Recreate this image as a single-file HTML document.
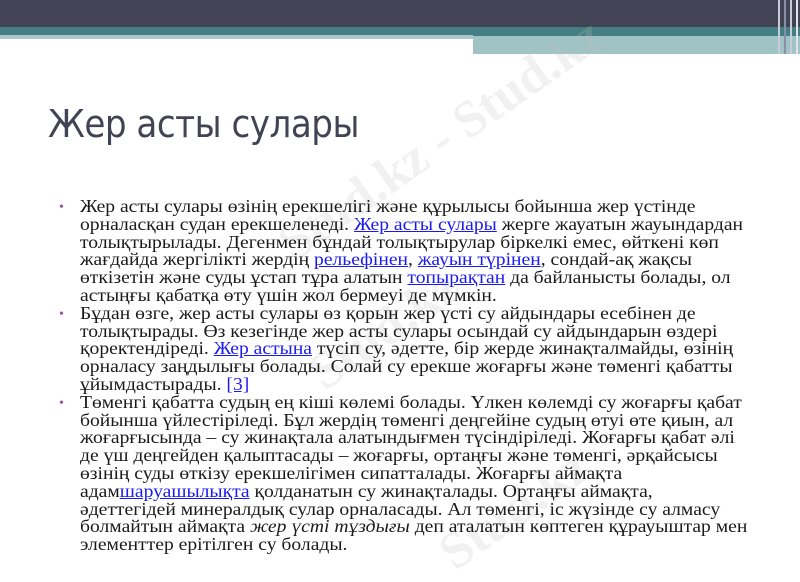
<!DOCTYPE html>
<html><head><meta charset="utf-8"><style>
body{margin:0;width:800px;height:556px;overflow:hidden;background:#fff;position:relative;font-family:"Liberation Serif",serif}
.d{position:absolute;left:0;top:0;width:800px;height:27px;background:#434356}
.t{position:absolute;left:0;top:27px;width:800px;height:9px;background:#447f83}
.l1{position:absolute;left:0;top:35px;width:473px;height:4px;background:#a9c9cb}
.l2{position:absolute;left:473px;top:36px;width:327px;height:18px;background:#a0c3c5}
.st{position:absolute;top:0;height:54px;width:2px;background:#c8ccd6}
h1{position:absolute;left:48px;top:102px;margin:0;font:38px "DejaVu Sans Condensed","DejaVu Sans",sans-serif;color:#434356;letter-spacing:-0.5px}
.b{position:absolute;left:80px;top:198px;font-size:17.5px;line-height:17.8px;color:#1a1a1a;white-space:nowrap;transform:scaleX(1.12);transform-origin:left top}
.dot{position:absolute;left:59px;font-size:14px;color:#9b4fa8}
a{color:#1a1aee;text-decoration:underline}
.wm{position:absolute;color:rgba(190,190,190,.22);font:bold 52px "Liberation Serif",serif;transform:rotate(-35deg);white-space:nowrap}
</style></head><body>
<div class="d"></div><div class="t"></div><div class="l1"></div><div class="l2"></div>
<div class="st" style="left:778px"></div><div class="st" style="left:784px;background:#8a8fa8"></div><div class="st" style="left:790px"></div><div class="st" style="left:796px;background:#e0e3ea"></div>
<h1>Жер асты сулары</h1>
<div class="wm" style="left:250px;top:110px">Stud.kz - Stud.kz</div>
<div class="wm" style="left:300px;top:300px">Stud.kz</div>
<div class="wm" style="left:430px;top:480px">Stud.kz</div>
<div class="dot" style="top:200px">•</div>
<div class="dot" style="top:307px">•</div>
<div class="dot" style="top:396px">•</div>
<div class="b">Жер асты сулары өзінің ерекшелігі және құрылысы бойынша жер үстінде<br>
орналасқан судан ерекшеленеді. <a>Жер асты сулары</a> жерге жауатын жауындардан<br>
толықтырылады. Дегенмен бұндай толықтырулар біркелкі емес, өйткені көп<br>
жағдайда жергілікті жердің <a>рельефінен</a>, <a>жауын түрінен</a>, сондай-ақ жақсы<br>
өткізетін және суды ұстап тұра алатын <a>топырақтан</a> да байланысты болады, ол<br>
астыңғы қабатқа өту үшін жол бермеуі де мүмкін.<br>
Бұдан өзге, жер асты сулары өз қорын жер үсті су айдындары есебінен де<br>
толықтырады. Өз кезегінде жер асты сулары осындай су айдындарын өздері<br>
қоректендіреді. <a>Жер астына</a> түсіп су, әдетте, бір жерде жинақталмайды, өзінің<br>
орналасу заңдылығы болады. Солай су ерекше жоғарғы және төменгі қабатты<br>
ұйымдастырады. <a>[3]</a><br>
Төменгі қабатта судың ең кіші көлемі болады. Үлкен көлемді су жоғарғы қабат<br>
бойынша үйлестіріледі. Бұл жердің төменгі деңгейіне судың өтуі өте қиын, ал<br>
жоғарғысында – су жинақтала алатындығмен түсіндіріледі. Жоғарғы қабат әлі<br>
де үш деңгейден қалыптасады – жоғарғы, ортаңғы және төменгі, әрқайсысы<br>
өзінің суды өткізу ерекшелігімен сипатталады. Жоғарғы аймақта<br>
адам<a>шаруашылықта</a> қолданатын су жинақталады. Ортаңғы аймақта,<br>
әдеттегідей минералдық сулар орналасады. Ал төменгі, іс жүзінде су алмасу<br>
болмайтын аймақта <i>жер үсті тұздығы</i> деп аталатын көптеген құрауыштар мен<br>
элементтер ерітілген су болады.</div>
</body></html>
